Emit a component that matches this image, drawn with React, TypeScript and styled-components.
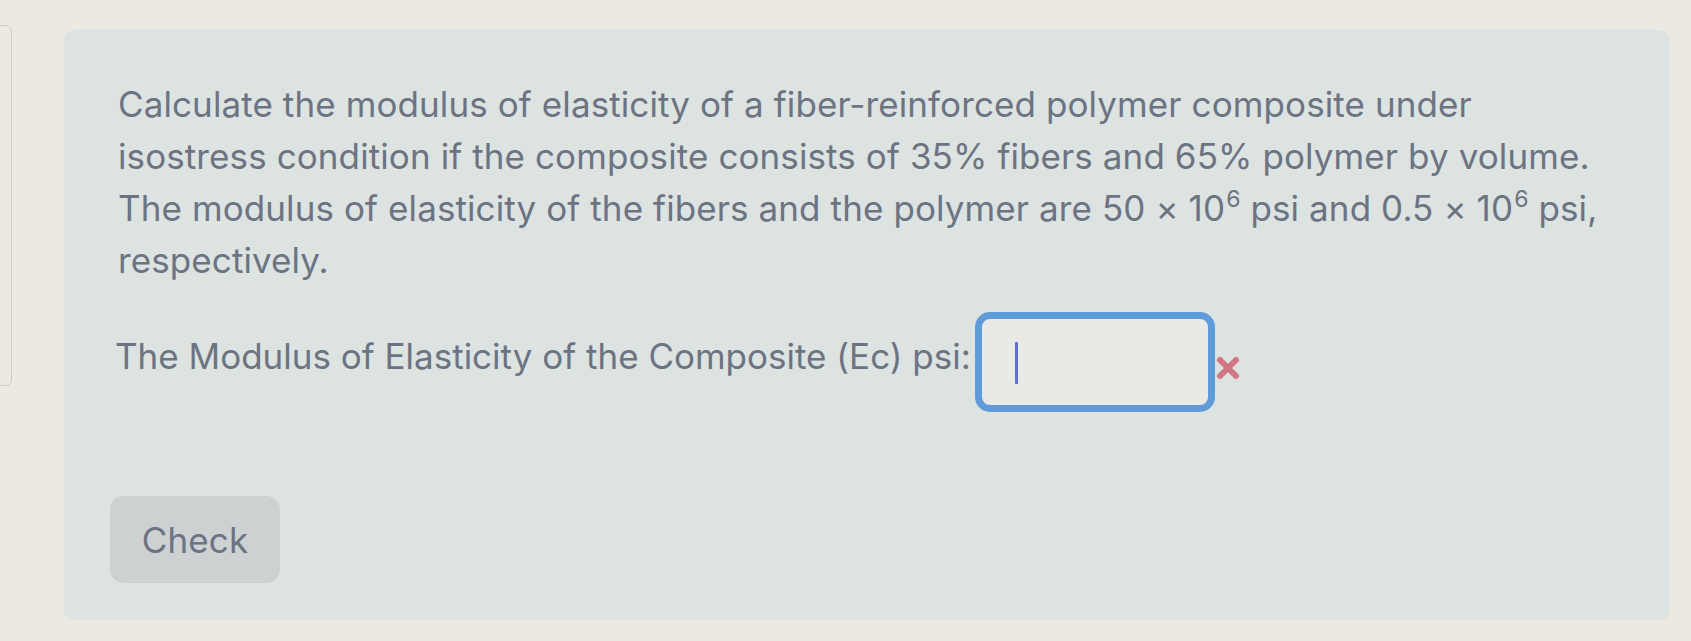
import React from 'react';
import styled, { createGlobalStyle } from 'styled-components';

const GlobalStyle = createGlobalStyle`
  html, body {
    margin: 0;
    padding: 0;
    background: #ece9e3;
  }
  body {
    font-family: Inter, "Liberation Sans", Arial, sans-serif;
    color: #6c7383;
  }
`

const Page = styled.div`
  display: flex;
  align-items: flex-start;
  width: 1691px;
  height: 641px;
  overflow: hidden;
`

// edge of the previous card, peeking in at the left
const SideCard = styled.div`
  width: 22px;
  height: 361px;
  margin: 25px 0 0 -10px;
  border: 1px solid #cfccc5;
  border-radius: 6px;
  box-sizing: border-box;
  background: #ece9e3;
`

const QuestionPanel = styled.div`
  display: flex;
  flex-direction: column;
  align-items: flex-start;
  box-sizing: border-box;
  width: 1606px;
  height: 590px;
  margin: 30px 0 0 52px;
  padding: 48px 0 0 54px;
  background: #dde3e0;
  border-radius: 10px;
`

const Prompt = styled.p`
  margin: 0;
  font-size: 35px;
  line-height: 52px;
  letter-spacing: 0.1px;
  white-space: nowrap;
`

const Sup = styled.sup`
  font-size: 0.66em;
  line-height: 0;
  vertical-align: 0.62em;
  margin-left: 1px;
`

const AnswerRow = styled.div`
  display: flex;
  align-items: flex-start;
  margin: 26px 0 0 -3px;
`

const Label = styled.span`
  font-size: 35px;
  line-height: 52px;
  margin: 18px 4px 0 0;
  white-space: nowrap;
`

const AnswerBox = styled.div`
  display: flex;
  align-items: center;
  box-sizing: border-box;
  width: 240px;
  height: 100px;
  padding-left: 33px;
  border: 7px solid #5f9bd8;
  border-radius: 15px;
  background: #e9eae5;
`

const Caret = styled.span`
  display: block;
  width: 3px;
  height: 42px;
  margin-top: 2px;
  background: #5b6fcc;
  border-radius: 1px;
`

const WrongMark = styled.svg`
  width: 26px;
  height: 26px;
  margin: 43px 0 0 0;
`

const CheckButton = styled.button`
  width: 170px;
  height: 87px;
  margin: 84px 0 0 -8px;
  padding: 0;
  border: none;
  border-radius: 14px;
  background: #cdd1d2;
  color: #6c7383;
  font-family: Inter, "Liberation Sans", Arial, sans-serif;
  font-size: 35px;
  letter-spacing: 0.1px;
  cursor: pointer;
`

export default function App() {
  return (
    <>
      <GlobalStyle />
      <Page>
        <SideCard />
        <QuestionPanel>
          <Prompt>
            Calculate the modulus of elasticity of a fiber-reinforced polymer composite under
            <br />
            isostress condition if the composite consists of 35% fibers and 65% polymer by volume.
            <br />
            The modulus of elasticity of the fibers and the polymer are 50 × 10<Sup>6</Sup> psi and 0.5 × 10<Sup>6</Sup> psi,
            <br />
            respectively.
          </Prompt>
          <AnswerRow>
            <Label>The Modulus of Elasticity of the Composite (Ec) psi:</Label>
            <AnswerBox>
              <Caret />
            </AnswerBox>
            <WrongMark viewBox="0 0 26 26">
              <path d="M5 5 L21 21 M21 5 L5 21" stroke="#d27585" strokeWidth="6" strokeLinecap="round" />
            </WrongMark>
          </AnswerRow>
          <CheckButton>Check</CheckButton>
        </QuestionPanel>
      </Page>
    </>
  );
}
